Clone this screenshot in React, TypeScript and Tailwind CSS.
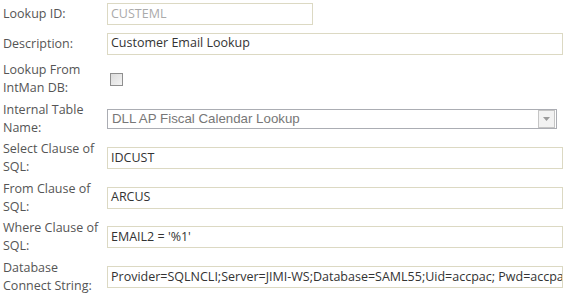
import React from "react";

const font = { fontFamily: '"Open Sans", "Noto Sans", sans-serif' };

function Row({ h, label, children }: { h: string; label: React.ReactNode; children: React.ReactNode }) {
  return (
    <div className={`flex items-center ${h}`}>
      <div className="w-[107px] shrink-0 pl-[3px] text-[12.5px] leading-[18px] text-[#555]">{label}</div>
      <div className="flex-1 flex items-center">{children}</div>
    </div>
  );
}

function TextBox({ value, w = "w-[456px]", color = "text-[#333]" }: { value: string; w?: string; color?: string }) {
  return (
    <div className={`${w} h-[22px] border border-[#dcd9c3] bg-white flex items-center pl-[3px] overflow-hidden whitespace-nowrap text-[12.5px] ${color}`}>
      {value}
    </div>
  );
}

export default function App() {
  return (
    <div className="w-[570px] h-[293px] bg-white overflow-hidden" style={font}>
      <Row h="h-[28px]" label="Lookup ID:">
        <TextBox value="CUSTEML" w="w-[206px]" color="text-[#aaa]" />
      </Row>
      <Row h="h-[31px]" label="Description:">
        <TextBox value="Customer Email Lookup" />
      </Row>
      <Row h="h-[40px]" label={<>Lookup From<br />IntMan DB:</>}>
        <div className="ml-[3px] w-[13px] h-[13px] border border-[#8f8f8f] bg-gradient-to-br from-[#dcdcdc] to-[#f4f4f4]" />
      </Row>
      <Row h="h-[39.5px]" label={<>Internal Table<br />Name:</>}>
        <div className="w-[450px] h-[20px] border border-[#abadb3] bg-white flex items-center justify-between pl-[4px]">
          <span className="text-[13.3px] text-[#777]" style={{ fontFamily: '"Liberation Sans", Arial, sans-serif' }}>
            DLL AP Fiscal Calendar Lookup
          </span>
          <div className="mr-[1px] w-[17px] h-[18px] border border-[#c5c5c5] bg-[#f2f2f2] flex items-center justify-center">
            <svg width="7" height="4" viewBox="0 0 7 4"><path d="M0 0H7L3.5 4Z" fill="#9a9a9a" /></svg>
          </div>
        </div>
      </Row>
      <Row h="h-[39.5px]" label={<>Select Clause of<br />SQL:</>}>
        <TextBox value="IDCUST" />
      </Row>
      <Row h="h-[39.5px]" label={<>From Clause of<br />SQL:</>}>
        <TextBox value="ARCUS" />
      </Row>
      <Row h="h-[39.5px]" label={<>Where Clause of<br />SQL:</>}>
        <TextBox value="EMAIL2 = '%1'" />
      </Row>
      <Row h="h-[40px]" label={<>Database<br />Connect String:</>}>
        <TextBox value="Provider=SQLNCLI;Server=JIMI-WS;Database=SAML55;Uid=accpac; Pwd=accpac" />
      </Row>
    </div>
  );
}
